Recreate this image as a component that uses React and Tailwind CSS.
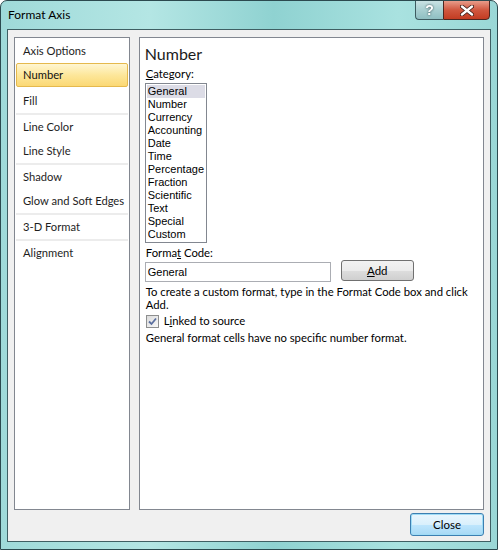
import React from "react";

const ui = { fontFamily: 'Lato, "Liberation Sans", sans-serif' };
const tah = { fontFamily: '"Liberation Sans", Arial, sans-serif' };

function Sep() {
  return <div className="h-[2px] mx-[1px] bg-[#ececec]" />;
}

function Item({ children, selected }) {
  if (selected) {
    return (
      <div className="h-[24px] mx-[1px] flex items-center pl-[6px] rounded-[2px] border border-[#e5b94d] bg-[linear-gradient(#fff6d2,#fde79b_50%,#fbd874)] text-[11.2px] text-[#111] whitespace-nowrap">
        {children}
      </div>
    );
  }
  return (
    <div className="h-[24px] flex items-center pl-[8px] text-[11.2px] text-[#1e1e1e] whitespace-nowrap">
      {children}
    </div>
  );
}

const cats = [
  "General",
  "Number",
  "Currency",
  "Accounting",
  "Date",
  "Time",
  "Percentage",
  "Fraction",
  "Scientific",
  "Text",
  "Special",
  "Custom",
];

export default function App() {
  return (
    <div
      className="w-[498px] h-[550px] relative overflow-hidden rounded-t-[7px] border border-[#2c4a4f] bg-[linear-gradient(90deg,#9fdad9,#b4e6e4_30%,#8fd2d1_55%,#a9e2e0_80%,#9ad7d6)] flex flex-col"
      style={ui}
    >
      {/* title bar */}
      <div className="h-[28px] shrink-0 flex items-center pl-[7px] text-[12px] text-black">
        Format Axis
      </div>
      <div className="absolute top-[-1px] right-[7px] flex">
        <div className="w-[28px] h-[20px] border border-[#3d5b60] border-r-0 rounded-bl-[4px] bg-[linear-gradient(#c9e2e3,#a8cfd1_50%,#8fbfc2)] flex items-center justify-center">
          <span className="text-white font-bold text-[14px] leading-none drop-shadow-[0_0_1px_#304a4d]" style={tah}>?</span>
        </div>
        <div className="w-[47px] h-[20px] border border-[#4d2620] rounded-br-[4px] bg-[linear-gradient(#e79c8a,#d0573f_50%,#c33c22)] flex items-center justify-center">
          <svg width="14" height="11" viewBox="0 0 14 11">
            <path d="M2 1.5 L12 9.5 M12 1.5 L2 9.5" stroke="#3a1a14" strokeWidth="4" strokeLinecap="round" />
            <path d="M2 1.5 L12 9.5 M12 1.5 L2 9.5" stroke="#fff" strokeWidth="2.4" strokeLinecap="round" />
          </svg>
        </div>
      </div>

      {/* client area */}
      <div className="mx-[6px] h-[513px] border border-[#3f5f63] bg-[#f0f0f0] flex flex-col px-[6px] pt-[7px] pb-[4px]">
        <div className="flex gap-[9px] h-[473px]">
          {/* left nav */}
          <div className="w-[116px] border border-[#828790] bg-white pt-[1px]">
            <Item>Axis Options</Item>
            <Item selected>Number</Item>
            <div className="h-[2px]" />
            <Item>Fill</Item>
            <Sep />
            <Item>Line Color</Item>
            <Item>Line Style</Item>
            <Sep />
            <Item>Shadow</Item>
            <Item>Glow and Soft Edges</Item>
            <Sep />
            <Item>3-D Format</Item>
            <Sep />
            <Item>Alignment</Item>
          </div>

          {/* right panel */}
          <div className="w-[346px] border border-[#828790] bg-white pl-[5px] text-[11.3px] text-black">
            <div className="h-[28px] pt-[4px] text-[16px] leading-[24px] text-[#1b1b1b]">Number</div>
            <div className="h-[16px] leading-[16px] pl-[1px]">
              <span className="underline">C</span>ategory:
            </div>
            <div className="w-[62px] h-[160px] mt-[1px] border border-[#828790] p-[1px]" style={tah}>
              {cats.map((c, i) => (
                <div
                  key={c}
                  className={
                    "h-[13px] leading-[13px] text-[11px] pl-[1px] " +
                    (i === 0 ? "bg-[#dcdce6]" : "")
                  }
                >
                  {c}
                </div>
              ))}
            </div>
            <div className="h-[19px] leading-[19px] pl-[1px]">
              Forma<span className="underline">t</span> Code:
            </div>
            <div className="flex items-start">
              <div className="w-[186px] h-[20px] border border-[#abadb3] flex items-center pl-[2px] text-[11px]" style={tah}>
                General
              </div>
              <div className="ml-[10px] -mt-[2px] w-[73px] h-[21px] rounded-[3px] border border-[#707070] bg-[linear-gradient(#f2f2f2,#ebebeb_50%,#dddddd_51%,#cfcfcf)] flex items-center justify-center text-[11.5px]">
                <span><span className="underline">A</span>dd</span>
              </div>
            </div>
            <div className="mt-[3px] leading-[13px] pl-[1px] w-[330px]">
              To create a custom format, type in the Format Code box and click Add.
            </div>
            <div className="flex items-center h-[14px] mt-[3px] pl-[1px]">
              <div className="w-[13px] h-[13px] border border-[#8e8f8f] bg-[linear-gradient(135deg,#dcdcdc,#f8f8f8)] flex items-center justify-center">
                <svg width="9" height="9" viewBox="0 0 9 9">
                  <path d="M1 4.5 L3.5 7 L8 1.5" stroke="#5b6f9f" strokeWidth="1.8" fill="none" />
                </svg>
              </div>
              <span className="ml-[5px]">
                L<span className="underline">i</span>nked to source
              </span>
            </div>
            <div className="mt-[3px] leading-[14px] pl-[1px]">
              General format cells have no specific number format.
            </div>
          </div>
        </div>
        <div className="flex justify-end mt-[3px] pr-[0px]">
          <div className="w-[74px] h-[23px] rounded-[3px] border border-[#3c7fb1] bg-[linear-gradient(#eaf6fd,#d9f0fc_50%,#bee6fd_51%,#a7d9f5)] shadow-[inset_0_0_0_1px_#9fdcf6] flex items-center justify-center text-[11.5px]">
            Close
          </div>
        </div>
      </div>
    </div>
  );
}
